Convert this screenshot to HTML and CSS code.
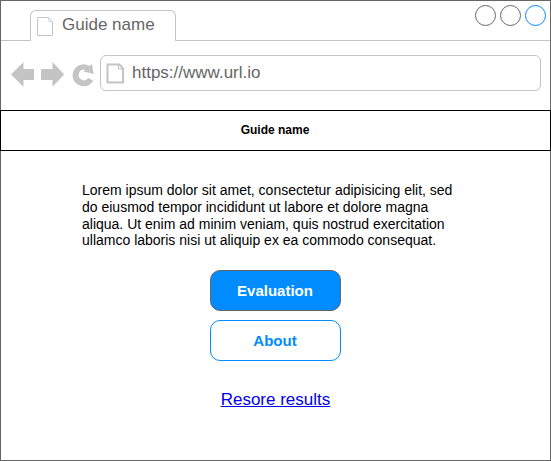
FILE: index.html
```html
<!DOCTYPE html>
<html lang="en">
<head>
<meta charset="utf-8">
<title>Guide name</title>
<link rel="stylesheet" href="styles.css">
</head>
<body>
<div class="window">
  <header class="tabs">
    <div class="tab-lead"></div>
    <div class="tab">
      <svg class="tab-icon" width="17" height="20" viewBox="0 0 17 20"><path d="M.5.5h11l4 4.500v13.500H.5z"/><path class="tab-fold" d="M11.500.5V4.500h4"/></svg>
      <span>Guide name</span>
    </div>
    <div class="tab-rest">
      <i class="dot"></i><i class="dot"></i><i class="dot dot-active"></i>
    </div>
  </header>
  <nav class="toolbar">
    <svg class="controls" width="84" height="26" viewBox="0 0 84 26">
      <path d="M0 12.500 12.500 0v7H23v11H12.500v6.700zM53.200 12.500 41.500 0v7H30v11h11.500v6.700z"/>
      <path d="M81 2 82.600 12 72 9.300 74.700 7.900A5.300 5.300 0 1 0 77.300 16L82.200 18.700A11 11 0 1 1 78.300 3.900z"/>
    </svg>
    <div class="address">
      <svg class="page-icon" width="19" height="22" viewBox="0 0 19 22"><path d="M1.500 1.500h12l3.500 4v14H1.500z"/><path class="fold" d="M12.500 1.500V6h5"/></svg>
      <span>https://www.url.io</span>
    </div>
  </nav>
  <h1 class="title">Guide name</h1>
  <main class="content">
    <p class="intro">Lorem ipsum dolor sit amet, consectetur adipisicing elit, sed do eiusmod tempor incididunt ut labore et dolore magna aliqua. Ut enim ad minim veniam, quis nostrud exercitation ullamco laboris nisi ut aliquip ex ea commodo consequat.</p>
    <button class="button primary">Evaluation</button>
    <button class="button">About</button>
    <a class="restore" href="#">Resore results</a>
  </main>
</div>
</body>
</html>
```

FILE: styles.css
```css
* { box-sizing: border-box; }
body {
  margin: 0;
  background: #fff;
  font-family: "Liberation Sans", Arial, sans-serif;
}
.window {
  width: 551px;
  height: 461px;
  border: 1px solid #666;
}
.tabs { display: flex; height: 40px; }
.tab-lead { width: 29px; border-bottom: 1px solid #c4c4c4; }
.tab {
  display: flex;
  width: 146px;
  margin-top: 9px;
  padding-left: 6px;
  border: 1px solid #c4c4c4;
  border-bottom: 0;
  border-radius: 6px 6px 0 0;
  color: #666;
  font-size: 17px;
  line-height: 20px;
}
.tab span { margin: 4px 0 0 8px; }
.tab-icon { margin-top: 6px; fill: none; stroke: #c4c4c4; }
.tab-fold { stroke-opacity: .5; }
.tab-rest {
  display: flex;
  flex: 1;
  justify-content: flex-end;
  gap: 4px;
  padding: 4px 4px 0 0;
  border-bottom: 1px solid #c4c4c4;
}
.dot {
  width: 21px;
  height: 21px;
  border: 1px solid #666;
  border-radius: 50%;
}
.dot-active { border-color: #008cff; }
.toolbar { display: flex; height: 69px; padding: 14px 9px 0 10px; }
.controls { margin-top: 7px; fill: #c4c4c4; }
.address {
  display: flex;
  width: 441px;
  height: 36px;
  margin-left: 5px;
  padding-left: 5px;
  border: 1px solid #c4c4c4;
  border-radius: 6px;
  color: #666;
  font-size: 17px;
  line-height: 20px;
}
.address span { margin: 7px 0 0 7px; }
.page-icon { margin-top: 7px; fill: none; stroke: #c4c4c4; stroke-width: 2; }
.fold { stroke-width: 1; }
.title {
  height: 41px;
  margin: 0 -1px;
  padding-right: 1px;
  border: 1px solid #000;
  color: #000;
  font-size: 12px;
  line-height: 39px;
  text-align: center;
}
.content { display: flex; flex-direction: column; align-items: center; }
.intro {
  align-self: flex-start;
  width: 380px;
  margin: 31px 0 21px 81px;
  font-size: 14px;
  line-height: 16.8px;
}
.button {
  width: 131px;
  height: 41px;
  margin-bottom: 9px;
  padding: 0 1px 0 0;
  border: 1px solid #008cff;
  border-radius: 10px;
  background: #fff;
  color: #008cff;
  font: bold 15px "Liberation Sans", Arial, sans-serif;
}
.primary { border-color: #666; background: #008cff; color: #fff; }
.restore {
  margin-top: 20px;
  color: #00e;
  font-size: 17px;
  line-height: 20px;
}
```
